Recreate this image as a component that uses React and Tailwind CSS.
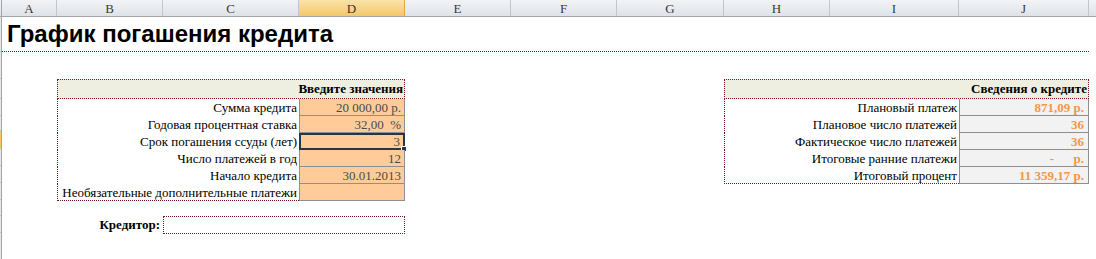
import React from 'react';

const columns = [
  { name: 'A', w: 'w-[55px]' },
  { name: 'B', w: 'w-[106px]' },
  { name: 'C', w: 'w-[136px]' },
  { name: 'D', w: 'w-[106px]', active: true },
  { name: 'E', w: 'w-[106px]' },
  { name: 'F', w: 'w-[106px]' },
  { name: 'G', w: 'w-[107px]' },
  { name: 'H', w: 'w-[106px]' },
  { name: 'I', w: 'w-[129px]' },
  { name: 'J', w: 'w-[130px]' },
];

const inputs = [
  { label: 'Сумма кредита', value: '20 000,00 р.' },
  { label: 'Годовая процентная ставка', value: '32,00  %' },
  { label: 'Срок погашения ссуды (лет)', value: '3', selected: true },
  { label: 'Число платежей в год', value: '12' },
  { label: 'Начало кредита', value: '30.01.2013' },
  { label: 'Необязательные дополнительные платежи', value: '' },
];

const summary = [
  { label: 'Плановый платеж', value: '871,09 р.' },
  { label: 'Плановое число платежей', value: '36' },
  { label: 'Фактическое число платежей', value: '36' },
  { label: 'Итоговые ранние платежи', value: '-      р.' },
  { label: 'Итоговый процент', value: '11 359,17 р.' },
];

const serif = "font-['Liberation_Serif',serif]";

const ColumnHeader = () => (
  <div className="flex h-[17px] border-b border-[#a5a5a5] bg-gradient-to-b from-[#f1f3f6] to-[#dfe3e8]">
    <div className="w-[2px] border-r border-[#a5a5a5]" />
    {columns.map((c) => (
      <div
        key={c.name}
        className={`${c.w} flex items-center justify-center border-r ${serif} text-[13px] leading-none ${
          c.active
            ? 'border-[#e2a93d] bg-gradient-to-b from-[#fbe3a8] to-[#f3c869] text-[#333]'
            : 'border-[#c3c7cc] text-[#3a3a3a]'
        }`}
      >
        {c.name}
      </div>
    ))}
    <div className="flex-1" />
  </div>
);

const RowStrip = () => (
  <div className="w-[2px] flex flex-col border-r border-[#a5a5a5] bg-[#e4e7ec]">
    <div className="h-[35px] border-b border-[#c3c7cc]" />
    <div className="h-[27px] border-b border-[#c3c7cc]" />
    <div className="h-[20px] border-b border-[#c3c7cc]" />
    <div className="h-[17px] border-b border-[#c3c7cc]" />
    <div className="h-[15px] border-b border-[#c3c7cc]" />
    <div className="h-[18px] bg-[#f5c55f]" />
    <div className="h-[17px] border-b border-[#c3c7cc]" />
    <div className="h-[17px] border-b border-[#c3c7cc]" />
    <div className="h-[17px] border-b border-[#c3c7cc]" />
    <div className="h-[16px] border-b border-[#c3c7cc]" />
    <div className="h-[17px] border-b border-[#c3c7cc]" />
    <div className="flex-1" />
  </div>
);

const InputTable = () => (
  <div className="w-[348px] ml-[55px]">
    <div className={`h-[20px] border border-dotted border-[#7a1a1a] bg-[#eeeee1] flex items-center justify-end pr-[1px] ${serif} text-[13px] font-bold text-black`}>
      Введите значения
    </div>
    {inputs.map((r, i) => (
      <div key={r.label} className="flex h-[17px]">
        <div
          className={`w-[242px] flex items-center justify-end pr-[2px] border-l border-dotted border-[#7a1a1a] ${
            i === inputs.length - 1 ? 'border-b' : ''
          } ${serif} text-[13px] leading-none text-black whitespace-nowrap`}
        >
          {r.label}
        </div>
        <div
          className={`relative w-[106px] flex items-center justify-end pr-[3px] bg-[#ffcc99] ${serif} text-[13px] leading-none text-[#4a4a4a] whitespace-pre ${
            r.selected ? 'border-2 border-[#263646]' : 'border-x border-b border-[#8f8f8f]'
          }`}
        >
          {r.value}
          {r.selected && (
            <span className="absolute -right-[4px] -bottom-[4px] w-[6px] h-[6px] bg-[#263646] border border-white" />
          )}
        </div>
      </div>
    ))}
  </div>
);

const SummaryTable = () => (
  <div className="w-[365px] ml-[319px]">
    <div className={`h-[20px] border border-dotted border-[#7a1a1a] bg-[#eeeee1] flex items-center justify-end pr-[1px] ${serif} text-[13px] font-bold text-black`}>
      Сведения о кредите
    </div>
    {summary.map((r, i) => (
      <div key={r.label} className="flex h-[17px]">
        <div
          className={`w-[235px] flex items-center justify-end pr-[2px] border-l border-dotted border-[#7a1a1a] ${
            i === summary.length - 1 ? 'border-b' : ''
          } ${serif} text-[13px] leading-none text-black whitespace-nowrap`}
        >
          {r.label}
        </div>
        <div
          className={`w-[130px] flex items-center justify-end pr-[4px] bg-[#f2f2f2] border-x border-b border-[#8f8f8f] ${serif} text-[13px] font-bold leading-none text-[#f79646] whitespace-pre`}
        >
          {r.value}
        </div>
      </div>
    ))}
  </div>
);

export default function App() {
  return (
    <div className="w-[1096px] h-[259px] bg-white overflow-hidden flex flex-col">
      <ColumnHeader />
      <div className="flex flex-1">
        <RowStrip />
        <div className="w-[1087px] flex flex-col">
          <div className="h-[35px] border-b border-dotted border-[#7a1a1a] flex items-center pl-[5px] font-['Liberation_Sans',sans-serif] text-[24px] font-bold text-black">
            График погашения кредита
          </div>
          <div className="h-[27px]" />
          <div className="flex items-start">
            <InputTable />
            <SummaryTable />
          </div>
          <div className="flex h-[18px] mt-[15px]">
            <div className={`w-[161px] flex items-center justify-end pr-[3px] ${serif} text-[13px] font-bold text-black`}>
              Кредитор:
            </div>
            <div className="w-[242px] border border-dotted border-[#7a1a1a]" />
          </div>
        </div>
      </div>
    </div>
  );
}
